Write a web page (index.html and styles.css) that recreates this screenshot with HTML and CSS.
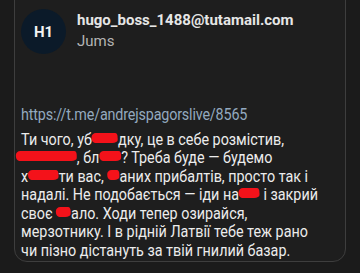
FILE: index.html
```html
<!DOCTYPE html>
<html lang="uk">
<head>
    <meta charset="UTF-8">
    <meta name="viewport" content="width=device-width, initial-scale=1.0">
    <title>Лист</title>
    <link rel="stylesheet" href="styles.css">
</head>
<body>
    <section class="lyst">
        <div class="shapka">
            <div class="avatar">H1</div>
            <div class="vid">
                <div class="adresa">hugo_boss_1488@tutamail.com</div>
                <div class="imya">Jums</div>
            </div>
        </div>

        <div class="tekst">
            <a class="posylannya" href="#">https://t.me/andrejspagorslive/8565</a>
            Ти чого, уб<span class="lyapka l1"></span>дку, це в себе розмістив,<br>
            <span class="lyapka l2"></span>, бл<span class="lyapka l3"></span>? Треба буде — будемо<br>
            х<span class="lyapka l4"></span>ти вас, <span class="lyapka l5"></span>аних прибалтів, просто так і<br>
            надалі. Не подобається — іди на<span class="lyapka l6"></span> і закрий<br>
            своє <span class="lyapka l7"></span>ало. Ходи тепер озирайся,<br>
            мерзотнику. І в рідній Латвії тебе теж рано<br>
            чи пізно дістануть за твій гнилий базар.
        </div>
    </section>
</body>
</html>
```

FILE: styles.css
```css
body {
    margin: 0px;
    padding: 0px;
    background-color: #1b1b1b;
    font-family: Roboto, "Noto Sans", sans-serif;
    color: #ececec;
    overflow: hidden;
}

.lyst {
    box-sizing: border-box;
    margin: -20px 14px 0 14px;
    padding-top: 20px;
    height: 282px;
    background-color: #1e1e1e;
    border: 1px solid #3e3e3e;
    border-radius: 0 0 13px 13px;
}

.shapka {
    display: flex;
    align-items: flex-start;
    padding: 8px 0 0 6px;
}

.avatar {
    width: 45px;
    height: 45px;
    border-radius: 50%;
    background-color: #0b1a29;
    color: #f2f2f2;
    font-weight: bold;
    font-size: 15px;
    display: flex;
    justify-content: center;
    align-items: center;
    flex-shrink: 0;
}

.vid {
    margin-left: 11px;
    margin-top: 1px;
}

.adresa {
    font-size: 15px;
    font-weight: bold;
    color: #e6e6e6;
    line-height: 20px;
}

.imya {
    font-size: 15px;
    color: #b4b4b4;
    margin-top: 2px;
}

.tekst {
    margin-top: 52px;
    padding-left: 7px;
    font-size: 16.5px;
    line-height: 18.5px;
    white-space: nowrap;
    transform: scaleX(0.87);
    transform-origin: left top;
}

.posylannya {
    display: block;
    margin-bottom: 6px;
    color: #93a9bf;
    text-decoration: none;
    letter-spacing: -0.2px;
}

/* червоні замазки поверх слів */
.lyapka {
    display: inline-block;
    height: 10px;
    background-color: #f4121a;
    border-radius: 5px 3px 6px 4px / 4px 5px 3px 5px;
    vertical-align: 2px;
}

.l1 { width: 30px; }
.l2 { width: 70px; margin-left: -6px; }
.l3 { width: 25px; }
.l4 { width: 35px; }
.l5 { width: 14px; }
.l6 { width: 24px; }
.l7 { width: 17px; }
```
